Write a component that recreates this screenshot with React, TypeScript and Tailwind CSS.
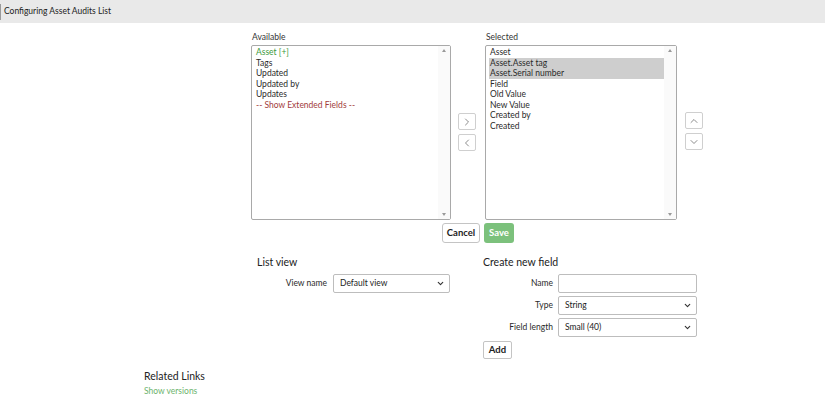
import { ChevronDown, ChevronLeft, ChevronRight, ChevronUp } from 'lucide-react';

type Item = { label: string; tone?: 'green' | 'red'; selected?: boolean };

const available: Item[] = [
  { label: 'Asset [+]', tone: 'green' },
  { label: 'Tags' },
  { label: 'Updated' },
  { label: 'Updated by' },
  { label: 'Updates' },
  { label: '-- Show Extended Fields --', tone: 'red' },
];

const chosen: Item[] = [
  { label: 'Asset' },
  { label: 'Asset.Asset tag', selected: true },
  { label: 'Asset.Serial number', selected: true },
  { label: 'Field' },
  { label: 'Old Value' },
  { label: 'New Value' },
  { label: 'Created by' },
  { label: 'Created' },
];

function ListBox({ title, items, width }: { title: string; items: Item[]; width: string }) {
  return (
    <div className={`flex flex-col ${width}`}>
      <p className="text-[8.5px] leading-[13px] text-[#333] mb-[1px] pl-[1px]">{title}</p>
      <div className="h-[175px] border border-[#a9a9a9] rounded-[2px] flex bg-white">
        <ul className="flex-1 pt-[1px] pl-[3px]">
          {items.map((it) => (
            <li
              key={it.label}
              className={`text-[8.5px] leading-[10.5px] h-[10.5px] pl-[1px] whitespace-nowrap ${
                it.selected ? 'bg-[#cecece]' : ''
              } ${it.tone === 'green' ? 'text-[#3d9a3d]' : it.tone === 'red' ? 'text-[#a23b3b]' : 'text-[#2a2a2a]'}`}
            >
              {it.label}
            </li>
          ))}
        </ul>
        <div className="w-[12px] flex flex-col justify-between items-center py-[3px] bg-[#fafafa]">
          <span className="w-0 h-0 border-x-[2px] border-x-transparent border-b-[3px] border-b-[#999]" />
          <span className="w-0 h-0 border-x-[2px] border-x-transparent border-t-[3px] border-t-[#999]" />
        </div>
      </div>
    </div>
  );
}

function IconBtn({ children }: { children: React.ReactNode }) {
  return (
    <button className="w-[18px] h-[17px] shrink-0 border border-[#cfcfcf] rounded-[2px] bg-white flex items-center justify-center text-[#666]">
      {children}
    </button>
  );
}

function FakeSelect({ value, width }: { value: string; width: string }) {
  return (
    <div className={`${width} h-[19px] border border-[#bdbdbd] rounded-[2px] bg-white flex items-center justify-between pl-[6px] pr-[4px]`}>
      <span className="text-[8.5px] text-[#222]">{value}</span>
      <ChevronDown size={9} strokeWidth={3} className="text-[#333]" />
    </div>
  );
}

export default function App() {
  return (
    <div className="w-[825px] h-[395px] overflow-hidden bg-white text-[#2a2a2a]" style={{ fontFamily: 'Lato, "Open Sans", sans-serif' }}>
      {/* Header */}
      <div className="h-[23px] bg-[#e9e9e9] flex items-center">
        <div className="w-[1px] h-[16px] bg-[#9a9a9a]" />
        <span className="text-[8.5px] text-[#222] pl-[3px]">Configuring Asset Audits List</span>
      </div>

      {/* Column chooser */}
      <div className="flex pl-[251px] pt-[8px]">
        <ListBox title="Available" items={available} width="w-[200px]" />
        <div className="flex flex-col justify-center gap-[4px] ml-[7px] mr-[9px] pt-[13px]">
          <IconBtn><ChevronRight size={12} strokeWidth={1.5} /></IconBtn>
          <IconBtn><ChevronLeft size={12} strokeWidth={1.5} /></IconBtn>
        </div>
        <ListBox title="Selected" items={chosen} width="w-[192px]" />
        <div className="flex flex-col justify-center gap-[4px] ml-[8px] pt-[11px]">
          <IconBtn><ChevronUp size={12} strokeWidth={1.5} /></IconBtn>
          <IconBtn><ChevronDown size={12} strokeWidth={1.5} /></IconBtn>
        </div>
      </div>

      {/* Actions */}
      <div className="flex gap-[4px] pl-[442px] pt-[3px]">
        <button className="w-[38px] h-[20px] border border-[#c4c4c4] rounded-[3px] bg-white text-[9.5px] font-bold text-[#222]">Cancel</button>
        <button className="w-[30px] h-[20px] rounded-[3px] bg-[#7cc17c] text-[9.5px] font-bold text-white">Save</button>
      </div>

      {/* Settings */}
      <div className="flex pl-[257px] pt-[11px]">
        <section className="w-[226px]">
          <h2 className="text-[10.5px] leading-[16px] text-[#222]">List view</h2>
          <div className="flex items-center mt-[4px]">
            <span className="w-[70px] text-right text-[8.5px]">View name</span>
            <div className="ml-[6px]">
              <FakeSelect value="Default view" width="w-[117px]" />
            </div>
          </div>
        </section>
        <section>
          <h2 className="text-[10.5px] leading-[16px] text-[#222]">Create new field</h2>
          <div className="flex flex-col gap-[3px] mt-[4px]">
            <div className="flex items-center">
              <span className="w-[70px] text-right text-[8.5px]">Name</span>
              <div className="ml-[5px] w-[139px] h-[19px] border border-[#bdbdbd] rounded-[2px] bg-white" />
            </div>
            <div className="flex items-center">
              <span className="w-[70px] text-right text-[8.5px]">Type</span>
              <div className="ml-[5px]"><FakeSelect value="String" width="w-[139px]" /></div>
            </div>
            <div className="flex items-center">
              <span className="w-[70px] text-right text-[8.5px]">Field length</span>
              <div className="ml-[5px]"><FakeSelect value="Small (40)" width="w-[139px]" /></div>
            </div>
          </div>
          <button className="block mt-[4px] w-[29px] h-[18px] border border-[#c4c4c4] rounded-[2px] bg-white text-[9.5px] font-bold text-[#222]">Add</button>
        </section>
      </div>

      {/* Related links */}
      <div className="pl-[144px] pt-[9px]">
        <h2 className="text-[10.5px] leading-[16px] text-[#222]">Related Links</h2>
        <a className="block text-[8.5px] leading-[11px] mt-[2px] text-[#6db46d]">Show versions</a>
      </div>
    </div>
  );
}
